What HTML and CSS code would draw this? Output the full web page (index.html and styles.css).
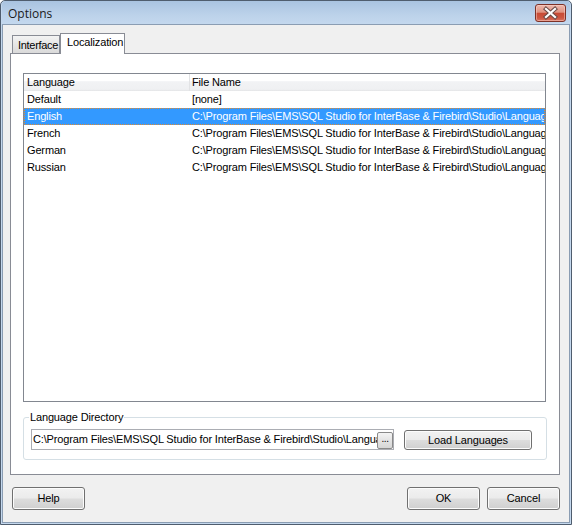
FILE: index.html
```html
<!DOCTYPE html>
<html>
<head>
<meta charset="utf-8">
<link rel="stylesheet" href="styles.css">
</head>
<body>
<div class="window">
  <div class="titlebar">
    <span class="title">Options</span>
    <div class="close">
      <svg width="29" height="16" viewBox="0 0 29 16">
        <path d="M10 4 L19 12 M19 4 L10 12" stroke="#6a4a46" stroke-width="4.2" stroke-linecap="square"/>
        <path d="M10 4 L19 12 M19 4 L10 12" stroke="#ffffff" stroke-width="2.2" stroke-linecap="square"/>
      </svg>
    </div>
  </div>
  <div class="client">
    <div class="tabs">
      <div class="tab">Interface</div>
      <div class="tab active">Localization</div>
    </div>
    <div class="page">
      <div class="list">
        <div class="row head"><div class="c1">Language</div><div class="c2">File Name</div></div>
        <div class="row"><div class="c1">Default</div><div class="c2">[none]</div></div>
        <div class="row selected"><div class="c1">English</div><div class="c2">C:\Program Files\EMS\SQL Studio for InterBase &amp; Firebird\Studio\Languages\English.lng</div></div>
        <div class="row"><div class="c1">French</div><div class="c2">C:\Program Files\EMS\SQL Studio for InterBase &amp; Firebird\Studio\Languages\French.lng</div></div>
        <div class="row"><div class="c1">German</div><div class="c2">C:\Program Files\EMS\SQL Studio for InterBase &amp; Firebird\Studio\Languages\German.lng</div></div>
        <div class="row"><div class="c1">Russian</div><div class="c2">C:\Program Files\EMS\SQL Studio for InterBase &amp; Firebird\Studio\Languages\Russian.lng</div></div>
      </div>
      <fieldset class="group">
        <legend>Language Directory</legend>
        <div class="group-row">
          <div class="edit">
            <span class="edit-text">C:\Program Files\EMS\SQL Studio for InterBase &amp; Firebird\Studio\Languages\</span>
            <div class="ellipsis">...</div>
          </div>
          <div class="btn load">Load Languages</div>
        </div>
      </fieldset>
    </div>
    <div class="footer">
      <div class="btn">Help</div>
      <div class="spacer"></div>
      <div class="btn">OK</div>
      <div class="btn">Cancel</div>
    </div>
  </div>
</div>
</body>
</html>
```

FILE: styles.css
```css
html, body {
  margin: 0;
  padding: 0;
  background: #ffffff;
}

.window {
  width: 572px;
  height: 525px;
  box-sizing: border-box;
  border: 1px solid #4f5d6e;
  border-radius: 5px 5px 0 0;
  background: #c4d8ee;
  padding: 0 1px 1px 1px;
  font-family: "Liberation Sans", Arial, sans-serif;
  font-size: 11px;
  letter-spacing: -0.15px;
  color: #000;
}

.titlebar {
  height: 23px;
  display: flex;
  align-items: flex-start;
  background: linear-gradient(#a9c3e0, #bcd2ea 60%, #c4d8ee);
  border-radius: 4px 4px 0 0;
}

.title {
  font-family: "Open Sans", "Liberation Sans", sans-serif;
  font-size: 12px;
  letter-spacing: 0;
  line-height: 16px;
  margin: 5px 0 0 6px;
  color: #1a1a1a;
  flex: 1;
}

.close {
  width: 31px;
  height: 18px;
  box-sizing: border-box;
  margin: 3px 4px 0 0;
  border: 1px solid #7d3127;
  border-radius: 3px;
  background: linear-gradient(#edb8ad 0%, #df9381 45%, #c84b35 52%, #cc5641 80%, #d97562 100%);
  box-shadow: inset 0 0 0 1px rgba(255, 220, 210, 0.45);
  display: flex;
}

.close svg {
  display: block;
}

.client {
  border: 1px solid #8b9db3;
  background: #f0f0f0;
  height: 497px;
  display: flex;
  flex-direction: column;
}

.tabs {
  margin-top: 8px;
  height: 20px;
  display: flex;
  align-items: flex-end;
  padding-left: 9px;
}

.tab {
  box-sizing: border-box;
  height: 18px;
  width: 48px;
  border: 1px solid #898c95;
  border-bottom: none;
  background: linear-gradient(#f3f3f3, #e6e6e6 50%, #dadada);
  line-height: 18px;
  padding-left: 5px;
  letter-spacing: -0.3px;
  white-space: nowrap;
  overflow: hidden;
}

.tab.active {
  height: 21px;
  width: 65px;
  margin-bottom: -1px;
  background: #ffffff;
  padding-left: 6px;
  line-height: 16px;
  letter-spacing: -0.15px;
  position: relative;
  z-index: 1;
}

.page {
  margin-left: 7px;
  width: 550px;
  height: 422px;
  box-sizing: border-box;
  border: 1px solid #898c95;
  background: #ffffff;
  padding: 19px 13px 14px 12px;
  display: flex;
  flex-direction: column;
}

.list {
  width: 523px;
  height: 329px;
  box-sizing: border-box;
  border: 1px solid #828790;
  background: #fff;
  overflow: hidden;
}

.row {
  display: flex;
  height: 17px;
  line-height: 17px;
  white-space: nowrap;
}

.row .c1 {
  width: 166px;
  flex: none;
  box-sizing: border-box;
  padding-left: 3px;
}

.row .c2 {
  flex: 1;
  overflow: hidden;
  padding-left: 2px;
}

.row.head {
  background: linear-gradient(#ffffff 0%, #ffffff 40%, #f2f3f5 45%, #eff0f2 90%, #e3e4e6 100%);
}

.row.head .c1 {
  border-right: 1px solid #e2e3e5;
}

.row.selected {
  background: #3399ff;
  color: #fff;
  box-sizing: border-box;
  border: 1px dotted #e08a30;
  line-height: 15px;
}

.row.selected .c1 {
  padding-left: 2px;
  width: 165px;
}

.group {
  margin: 9px 0 0 0;
  width: 524px;
  box-sizing: border-box;
  border: 1px solid #d5dfe5;
  border-radius: 3px;
  padding: 5px 7px 9px 7px;
  min-width: 0;
}

.group legend {
  padding: 0 1px;
  margin-left: -2px;
  line-height: 13px;
  height: 13px;
}

.group-row {
  display: flex;
  align-items: flex-end;
}

.edit {
  width: 363px;
  height: 21px;
  box-sizing: border-box;
  border: 1px solid #abadb3;
  display: flex;
  align-items: center;
  background: #fff;
  overflow: hidden;
}

.edit-text {
  flex: 1;
  min-width: 0;
  overflow: hidden;
  white-space: nowrap;
  padding-left: 1px;
  line-height: 17px;
}

.ellipsis {
  width: 16px;
  height: 17px;
  box-sizing: border-box;
  flex: none;
  border: 1px solid #8a8a8a;
  border-radius: 2px;
  background: linear-gradient(#f4f4f4, #e4e4e4 50%, #d6d6d6);
  font-size: 10px;
  line-height: 12px;
  text-align: center;
  letter-spacing: -0.5px;
  margin-top: 1px;
}

.btn {
  box-sizing: border-box;
  width: 73px;
  height: 23px;
  border: 1px solid #707070;
  border-radius: 3px;
  background: linear-gradient(#f2f2f2 0%, #ebebeb 48%, #dddddd 52%, #cfcfcf 100%);
  box-shadow: inset 0 0 0 1px #fcfcfc;
  text-align: center;
  line-height: 21px;
  flex: none;
}

.btn.load {
  width: 128px;
  height: 20px;
  line-height: 18px;
  margin-left: 10px;
}

.footer {
  display: flex;
  margin-top: 12px;
  padding: 0 9px;
  gap: 7px;
}

.spacer {
  flex: 1;
}
```
